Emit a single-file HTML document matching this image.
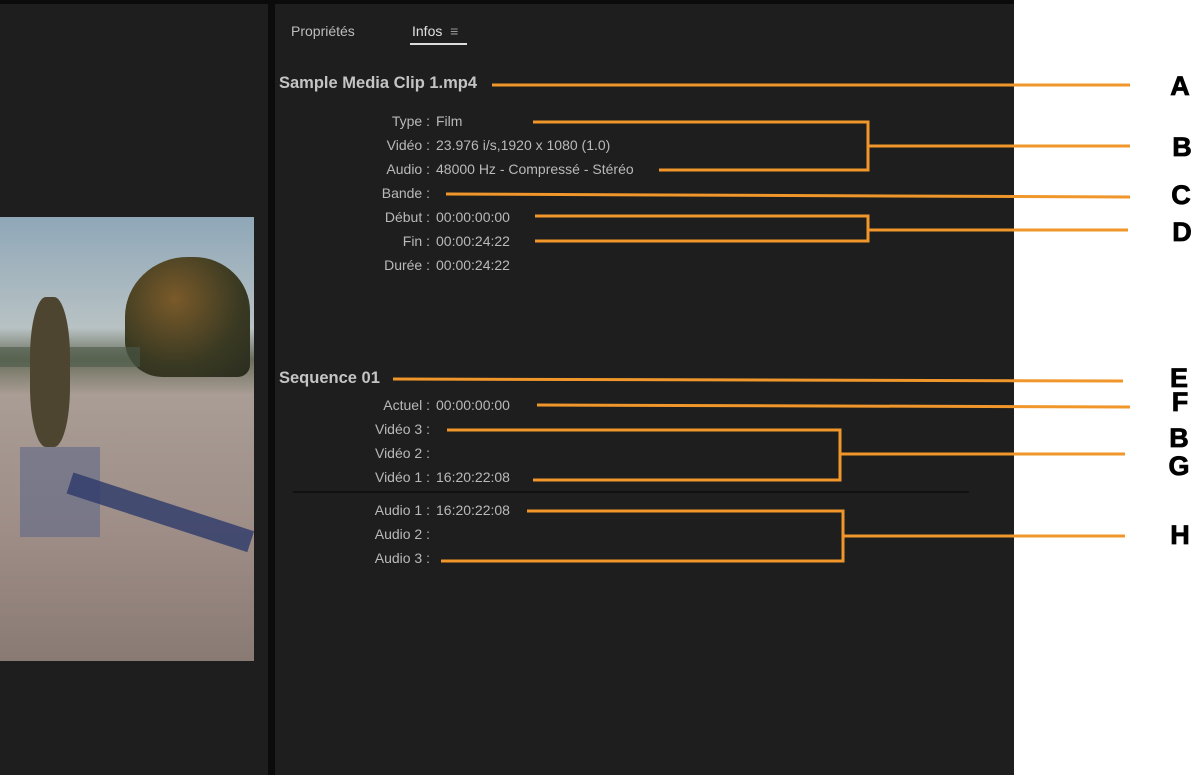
<!DOCTYPE html>
<html><head><meta charset="utf-8"><style>
body{margin:0;width:1200px;height:775px;background:#fff;position:relative;overflow:hidden;font-family:"Liberation Sans",sans-serif;}
#left{position:absolute;left:0;top:0;width:268px;height:775px;background:#1e1e1e;}
#div{position:absolute;left:268px;top:0;width:7px;height:775px;background:#0b0b0b;}
#panel{position:absolute;left:275px;top:0;width:739px;height:775px;background:#1e1e1e;}
#top{position:absolute;left:0;top:0;width:1014px;height:4px;background:#0b0b0b;}
#img{position:absolute;left:0;top:217px;width:254px;height:444px;overflow:hidden;
background:linear-gradient(180deg,#8fa7b8 0%,#b8c2c4 25%,#6b6f5c 32%,#a99d95 40%,#9e8e87 70%,#8a7a74 100%);}
.t{position:absolute;color:#b9b9b9;font-size:14px;white-space:nowrap;}
.h{position:absolute;color:#c4c4c4;font-size:16.5px;font-weight:bold;white-space:nowrap;}
.r{text-align:right;width:160px;}
</style></head><body>
<div id="left"></div>
<div id="img">
 <div style="position:absolute;left:125px;top:40px;width:125px;height:120px;border-radius:50% 45% 10% 30%;background:radial-gradient(circle at 40% 35%,#7a5a2a,#3a3a22 60%,#2a2c20);"></div>
 <div style="position:absolute;left:0;top:130px;width:140px;height:20px;background:#4b5a4a;opacity:.6"></div>
 <div style="position:absolute;left:30px;top:80px;width:40px;height:150px;border-radius:40%;background:#4d4530;"></div>
 <div style="position:absolute;left:20px;top:230px;width:80px;height:90px;background:#5a6488;opacity:.55;"></div>
 <div style="position:absolute;left:70px;top:255px;width:190px;height:22px;background:#2d3a6a;transform:rotate(18deg);transform-origin:left;opacity:.8"></div>
</div>
<div id="div"></div>
<div id="panel"></div>
<div id="top"></div>
<div class="t" style="left:291px;top:23px;font-size:14px;color:#bdbdbd">Propriétés</div>
<div class="t" style="left:412px;top:23px;font-size:14px;color:#e0e0e0">Infos &nbsp;<span style="color:#999">≡</span></div>
<div style="position:absolute;left:410px;top:43px;width:57px;height:2px;background:#ddd"></div>
<div class="h" style="left:279px;top:74px">Sample Media Clip 1.mp4</div>
<div class="t r" style="left:270px;top:113px">Type :</div><div class="t" style="left:436px;top:113px">Film</div>
<div class="t r" style="left:270px;top:137px">Vidéo :</div><div class="t" style="left:436px;top:137px">23.976 i/s,1920 x 1080 (1.0)</div>
<div class="t r" style="left:270px;top:161px">Audio :</div><div class="t" style="left:436px;top:161px">48000 Hz - Compressé - Stéréo</div>
<div class="t r" style="left:270px;top:185px">Bande :</div>
<div class="t r" style="left:270px;top:209px">Début :</div><div class="t" style="left:436px;top:209px">00:00:00:00</div>
<div class="t r" style="left:270px;top:233px">Fin :</div><div class="t" style="left:436px;top:233px">00:00:24:22</div>
<div class="t r" style="left:270px;top:257px">Durée :</div><div class="t" style="left:436px;top:257px">00:00:24:22</div>
<div class="h" style="left:279px;top:369px">Sequence 01</div>
<div class="t r" style="left:270px;top:397px">Actuel :</div><div class="t" style="left:436px;top:397px">00:00:00:00</div>
<div class="t r" style="left:270px;top:421px">Vidéo 3 :</div>
<div class="t r" style="left:270px;top:445px">Vidéo 2 :</div>
<div class="t r" style="left:270px;top:469px">Vidéo 1 :</div><div class="t" style="left:436px;top:469px">16:20:22:08</div>
<div style="position:absolute;left:293px;top:491px;width:676px;height:2px;background:#111"></div>
<div class="t r" style="left:270px;top:502px">Audio 1 :</div><div class="t" style="left:436px;top:502px">16:20:22:08</div>
<div class="t r" style="left:270px;top:526px">Audio 2 :</div>
<div class="t r" style="left:270px;top:550px">Audio 3 :</div>
<svg width="1200" height="775" style="position:absolute;left:0;top:0" fill="none" stroke="#f0962a" stroke-width="3">
<path d="M492 85H1130"/>
<path d="M533 122H868V170H659M868 146H1130"/>
<path d="M446 194L1130 197"/>
<path d="M535 216H868V241H535M868 230H1128"/>
<path d="M393 379L1123 381"/>
<path d="M537 405L1130 407"/>
<path d="M447 430H840V480H533M840 454H1125"/>
<path d="M527 511H843V561H441M843 536H1125"/>
<g fill="#000" stroke="#000" stroke-width="0.8" font-family="Liberation Sans,sans-serif" font-weight="bold" font-size="27" text-anchor="middle">
<text x="1180" y="95">A</text><text x="1182" y="156">B</text><text x="1181" y="204">C</text><text x="1182" y="241">D</text>
<text x="1179" y="387">E</text><text x="1180" y="411">F</text><text x="1179" y="447">B</text><text x="1179" y="475">G</text><text x="1180" y="544">H</text>
</g></svg>
</body></html>
